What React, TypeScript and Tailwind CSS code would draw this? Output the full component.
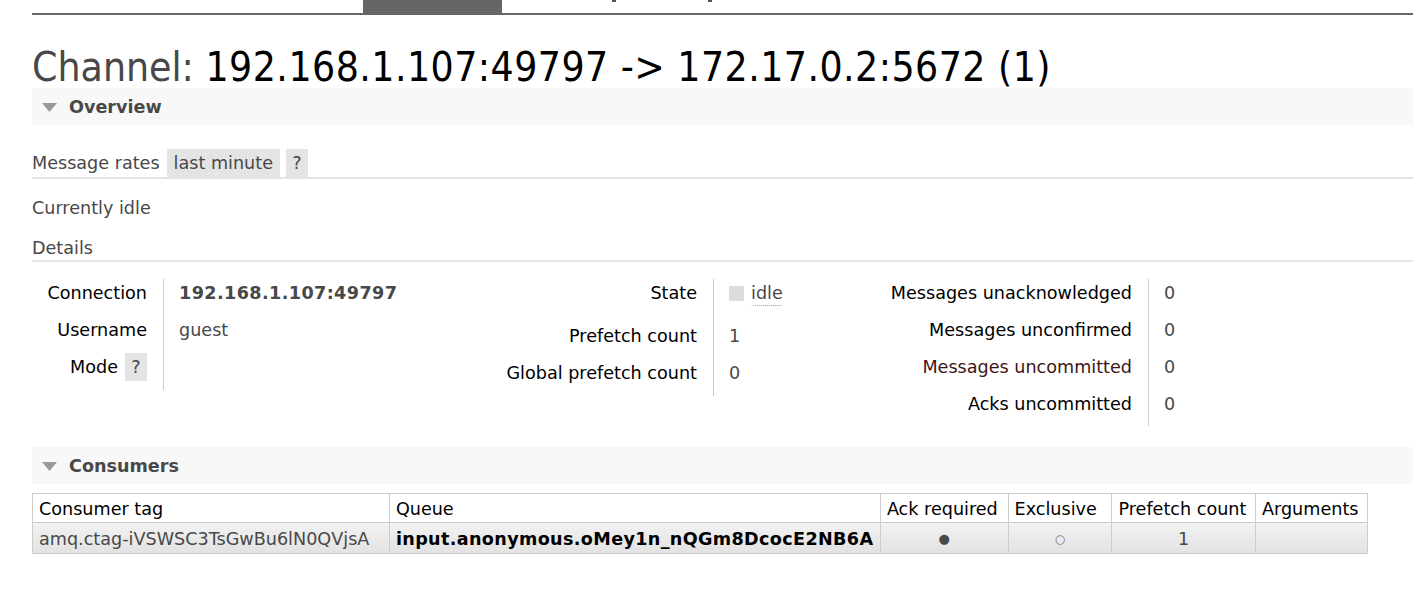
import React from "react";

const Tri = () => (
  <svg width="15" height="9" viewBox="0 0 15 9" className="shrink-0">
    <polygon points="0,0 15,0 7.5,9" fill="#999" />
  </svg>
);

const Label = ({ children, tall }: { children: React.ReactNode; tall?: boolean }) => (
  <div className={`${tall ? "h-[43px]" : "h-[37px]"} pt-[2px] leading-[24px] text-right text-black whitespace-nowrap`}>
    {children}
  </div>
);
const Val = ({ children, tall }: { children: React.ReactNode; tall?: boolean }) => (
  <div className={`${tall ? "h-[43px]" : "h-[37px]"} pt-[2px] leading-[24px] text-[#484848] whitespace-nowrap`}>
    {children}
  </div>
);

export default function App() {
  return (
    <div className="w-[1413px] h-[590px] overflow-hidden bg-white font-['DejaVu_Sans',Verdana,sans-serif] text-[17.6px] text-[#484848]">
      {/* nav remnant */}
      <div className="ml-[32px] h-[15px] border-b-2 border-[#666] flex items-start">
        <div className="w-[331px]" />
        <div className="w-[139px] h-[13px] bg-[#666]" />
        <div className="ml-[110px] w-[4px] h-[2px] bg-[#555]" />
        <div className="ml-[92px] w-[4px] h-[2px] bg-[#555]" />
      </div>

      <div className="pl-[32px]">
        <h1 className="mt-[31px] h-[42px] leading-[42px] font-['DejaVu_Sans_Condensed','DejaVu_Sans',sans-serif] font-stretch-condensed text-[40.5px] whitespace-nowrap">
          <span className="text-[#484848]">Channel: </span>
          <span className="text-black tracking-[0.45px]">192.168.1.107:49797 -&gt; 172.17.0.2:5672 (1)</span>
        </h1>

        {/* Overview header */}
        <div className="h-[37px] bg-[#f8f8f8] flex items-center pl-[10px] pt-[2px] gap-[12px]">
          <Tri />
          <span className="font-bold text-[#484848]">Overview</span>
        </div>

        {/* Message rates */}
        <div className="mt-[24px] flex items-end border-b-2 border-[#e4e4e4]">
          <span className="leading-[28px] mr-[7px]">Message rates</span>
          <span className="h-[28px] leading-[28px] px-[7px] bg-[#e4e4e4]">last minute</span>
          <span className="ml-[6px] h-[28px] leading-[28px] w-[22px] text-center bg-[#e4e4e4]">?</span>
        </div>

        <div className="mt-[17px] leading-[24px]">Currently idle</div>

        <div className="mt-[16px] leading-[24px] border-b-2 border-[#e4e4e4]">Details</div>

        {/* Details facts */}
        <div className="mt-[17px] flex items-start">
          <div className="flex items-start">
            <div className="w-[131px] pr-[16px]">
              <Label>Connection</Label>
              <Label>Username</Label>
              <div className="h-[37px] flex justify-end items-start">
                <span className="leading-[24px] pt-[2px] text-black">Mode</span>
                <span className="ml-[7px] h-[28px] leading-[28px] w-[22px] text-center bg-[#e4e4e4] text-[#484848]">?</span>
              </div>
            </div>
            <div className="w-[250px] border-l border-[#ccc] pl-[15px]">
              <Val><span className="font-bold tracking-[0.4px]">192.168.1.107:49797</span></Val>
              <Val>guest</Val>
              <div className="h-[37px]" />
            </div>
          </div>

          <div className="flex items-start">
            <div className="w-[300px] pr-[16px]">
              <Label tall>State</Label>
              <Label>Prefetch count</Label>
              <Label>Global prefetch count</Label>
            </div>
            <div className="w-[137px] border-l border-[#ccc] pl-[15px]">
              <div className="h-[43px] pt-[2px] flex items-start">
                <span className="mt-[5px] w-[15px] h-[15px] bg-[#ddd]" />
                <span className="ml-[7px] leading-[24px] border-b border-dotted border-[#999] rounded-[3px]">idle</span>
              </div>
              <Val>1</Val>
              <Val>0</Val>
            </div>
          </div>

          <div className="flex items-start">
            <div className="w-[298px] pr-[16px]">
              <Label>Messages unacknowledged</Label>
              <Label>Messages unconfirmed</Label>
              <div className="h-[37px] pt-[2px] leading-[24px] text-right text-[#3d1515] whitespace-nowrap">Messages uncommitted</div>
              <div className="h-[36px] pt-[2px] leading-[24px] text-right text-black whitespace-nowrap">Acks uncommitted</div>
            </div>
            <div className="w-[100px] border-l border-[#ccc] pl-[15px]">
              <Val>0</Val>
              <Val>0</Val>
              <Val>0</Val>
              <div className="h-[36px] pt-[2px] leading-[24px] text-[#484848]">0</div>
            </div>
          </div>
        </div>

        {/* Consumers header */}
        <div className="mt-[21px] h-[37px] bg-[#f8f8f8] flex items-center pl-[10px] pt-[2px] gap-[12px]">
          <Tri />
          <span className="font-bold text-[#484848]">Consumers</span>
        </div>

        <table className="mt-[9px] border-collapse border border-[#ccc] w-[1336px]">
          <thead>
            <tr className="h-[29px] bg-white text-black">
              <th className="w-[357px] border border-[#ccc] font-normal text-left px-[6px] pt-[1px] leading-[24px]">Consumer tag</th>
              <th className="w-[491px] border border-[#ccc] font-normal text-left px-[6px] pt-[1px] leading-[24px]">Queue</th>
              <th className="w-[128px] border border-[#ccc] font-normal text-left px-[6px] pt-[1px] leading-[24px]">Ack required</th>
              <th className="w-[104px] border border-[#ccc] font-normal text-left px-[6px] pt-[1px] leading-[24px]">Exclusive</th>
              <th className="w-[144px] border border-[#ccc] font-normal text-left px-[6px] pt-[1px] leading-[24px]">Prefetch count</th>
              <th className="w-[112px] border border-[#ccc] font-normal text-left px-[6px] pt-[1px] leading-[24px]">Arguments</th>
            </tr>
          </thead>
          <tbody>
            <tr className="h-[31px] bg-gradient-to-b from-[#f2f2f2] to-[#e2e2e2]">
              <td className="border border-[#ccc] px-[6px] pt-[1px] leading-[24px] text-[#484848] whitespace-nowrap">amq.ctag-iVSWSC3TsGwBu6lN0QVjsA</td>
              <td className="border border-[#ccc] px-[6px] pt-[1px] leading-[24px] text-black font-bold tracking-[0.35px] whitespace-nowrap">input.anonymous.oMey1n_nQGm8DcocE2NB6A</td>
              <td className="border border-[#ccc] px-[6px] pt-[1px] leading-[24px] text-center text-[#484848] text-[13px]">●</td>
              <td className="border border-[#ccc] px-[6px] pt-[1px] leading-[24px] text-center text-[#777] text-[12px]">○</td>
              <td className="border border-[#ccc] px-[6px] pt-[1px] leading-[24px] text-center text-[#484848]">1</td>
              <td className="border border-[#ccc] px-[6px] leading-[24px]"></td>
            </tr>
          </tbody>
        </table>
      </div>
    </div>
  );
}
